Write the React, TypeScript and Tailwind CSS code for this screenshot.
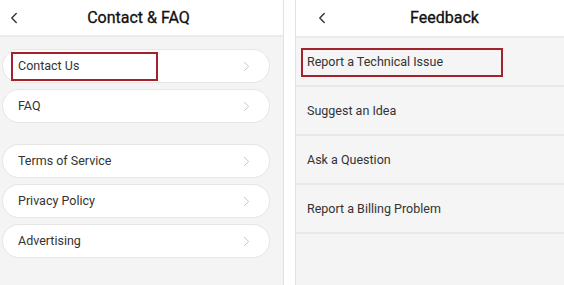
import { ChevronLeft, ChevronRight } from "lucide-react";

type Item = { label: string; highlighted?: boolean };

const contactGroups: Item[][] = [
  [{ label: "Contact Us", highlighted: true }, { label: "FAQ" }],
  [{ label: "Terms of Service" }, { label: "Privacy Policy" }, { label: "Advertising" }],
];

const feedbackItems: Item[] = [
  { label: "Report a Technical Issue", highlighted: true },
  { label: "Suggest an Idea" },
  { label: "Ask a Question" },
  { label: "Report a Billing Problem" },
];

function PillRow({ item }: { item: Item }) {
  return (
    <div className="relative flex h-[34px] items-center justify-between rounded-full border border-[#e6e6e6] bg-white pl-[15px] pr-[14px]">
      <span className="text-[12.5px] text-[#333]">{item.label}</span>
      <ChevronRight className="text-[#c4c4c4]" size={17} strokeWidth={1.4} />
      {/* highlight box drawn over the row */}
      {item.highlighted && (
        <div className="absolute left-[8px] top-[2px] h-[29px] w-[147px] border-2 border-[#a3232c]" />
      )}
    </div>
  );
}

function ContactPanel() {
  return (
    <div className="flex h-full w-[284px] shrink-0 flex-col border-r border-[#e2e2e2] bg-[#f4f4f4]">
      <div className="grid h-[37px] grid-cols-[34px_1fr_40px] items-center border-b-2 border-[#ebebeb] bg-white">
        <ChevronLeft className="ml-[5px] text-[#333]" size={18} strokeWidth={1.8} />
        <span className="text-center text-[16px] text-[#111] [-webkit-text-stroke:0.3px_#111]">
          Contact &amp; FAQ
        </span>
        <span />
      </div>
      <div className="flex flex-col gap-[21px] pl-[2px] pr-[13px] pt-[12px]">
        {contactGroups.map((group, i) => (
          <div key={i} className="flex flex-col gap-[6px]">
            {group.map((item) => (
              <PillRow key={item.label} item={item} />
            ))}
          </div>
        ))}
      </div>
    </div>
  );
}

function FeedbackPanel() {
  return (
    <div className="flex h-full w-[296px] shrink-0 flex-col border-l border-[#e2e2e2] bg-[#f4f4f4]">
      <div className="grid h-[38px] grid-cols-[48px_1fr_46px] items-center border-b-2 border-[#ebebeb] bg-white">
        <ChevronLeft className="ml-[17px] text-[#333]" size={18} strokeWidth={1.8} />
        <span className="text-center text-[16px] text-[#111] [-webkit-text-stroke:0.3px_#111]">
          Feedback
        </span>
        <span />
      </div>
      <div className="flex flex-col">
        {feedbackItems.map((item) => (
          <div
            key={item.label}
            className="relative flex h-[49px] items-center border-b-2 border-[#e8e8e8] bg-[#f5f5f5] pl-[11px] pt-[2px]"
          >
            <span className="text-[12.5px] text-[#333]">{item.label}</span>
            {item.highlighted && (
              <div className="absolute left-[5px] top-[10px] h-[29px] w-[202px] border-2 border-[#a3232c]" />
            )}
          </div>
        ))}
      </div>
    </div>
  );
}

export default function App() {
  return (
    <div
      className="flex h-[285px] w-[564px] gap-[11px] overflow-hidden bg-white"
      style={{ fontFamily: "Roboto, 'Liberation Sans', sans-serif" }}
    >
      <ContactPanel />
      <FeedbackPanel />
    </div>
  );
}
